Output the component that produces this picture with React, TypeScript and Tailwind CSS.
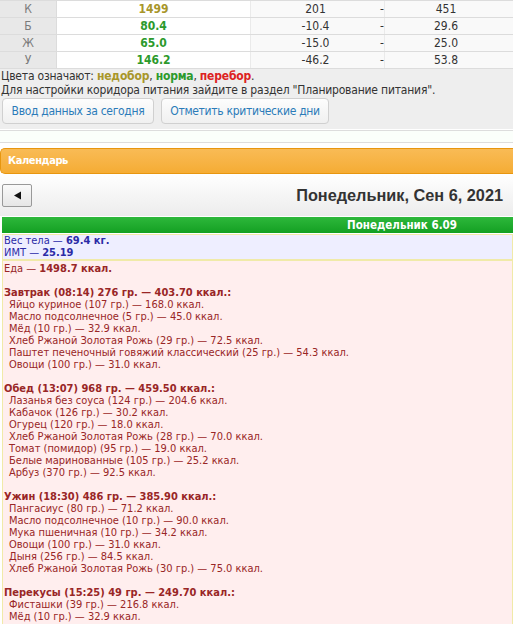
import React from "react";

const rows = [
  { k: "К", v: "1499", c: "text-[#a8962a]", a: "201", b: "451" },
  { k: "Б", v: "80.4", c: "text-[#2c9a2c]", a: "-10.4", b: "29.6" },
  { k: "Ж", v: "65.0", c: "text-[#2c9a2c]", a: "-15.0", b: "25.0" },
  { k: "У", v: "146.2", c: "text-[#2c9a2c]", a: "-46.2", b: "53.8" },
];

const meals = [
  {
    h: "Завтрак (08:14) 276 гр. — 403.70 ккал.:",
    items: [
      "Яйцо куриное (107 гр.) — 168.0 ккал.",
      "Масло подсолнечное (5 гр.) — 45.0 ккал.",
      "Мёд (10 гр.) — 32.9 ккал.",
      "Хлеб Ржаной Золотая Рожь (29 гр.) — 72.5 ккал.",
      "Паштет печеночный говяжий классический (25 гр.) — 54.3 ккал.",
      "Овощи (100 гр.) — 31.0 ккал.",
    ],
  },
  {
    h: "Обед (13:07) 968 гр. — 459.50 ккал.:",
    items: [
      "Лазанья без соуса (124 гр.) — 204.6 ккал.",
      "Кабачок (126 гр.) — 30.2 ккал.",
      "Огурец (120 гр.) — 18.0 ккал.",
      "Хлеб Ржаной Золотая Рожь (28 гр.) — 70.0 ккал.",
      "Томат (помидор) (95 гр.) — 19.0 ккал.",
      "Белые маринованные (105 гр.) — 25.2 ккал.",
      "Арбуз (370 гр.) — 92.5 ккал.",
    ],
  },
  {
    h: "Ужин (18:30) 486 гр. — 385.90 ккал.:",
    items: [
      "Пангасиус (80 гр.) — 71.2 ккал.",
      "Масло подсолнечное (10 гр.) — 90.0 ккал.",
      "Мука пшеничная (10 гр.) — 34.2 ккал.",
      "Овощи (100 гр.) — 31.0 ккал.",
      "Дыня (256 гр.) — 84.5 ккал.",
      "Хлеб Ржаной Золотая Рожь (30 гр.) — 75.0 ккал.",
    ],
  },
  {
    h: "Перекусы (15:25) 49 гр. — 249.70 ккал.:",
    items: ["Фисташки (39 гр.) — 216.8 ккал.", "Мёд (10 гр.) — 32.9 ккал."],
  },
];

export default function App() {
  return (
    <div className="w-[513px] h-[624px] overflow-hidden bg-white font-['DejaVu_Sans_Condensed','DejaVu_Sans',sans-serif]">
      <div className="bg-[#eeeeee] pb-[5px]">
        <div className="border-t border-[#dcdcdc]">
          {rows.map((r) => (
            <div key={r.k} className="flex h-[17px] border-b border-[#dcdcdc] text-[12px] leading-[16px]">
              <div className="w-[57px] bg-[#e8e8e8] text-[#7a7a7a] text-center border-r border-[#dcdcdc]">{r.k}</div>
              <div className={`w-[193px] bg-white text-center font-bold ${r.c}`}>{r.v}</div>
              <div className="w-[130px] bg-[#f9f9f9] text-center text-[#333] border-l border-[#eaeaea]">{r.a}</div>
              <div className="w-[4px] bg-[#f9f9f9] text-[#333] text-center">-</div>
              <div className="flex-1 bg-[#f9f9f9] text-center text-[#333] pr-[6px] border-l border-[#eaeaea]">{r.b}</div>
            </div>
          ))}
        </div>
        <div className="text-[12px] leading-[14px] tracking-[-0.2px] text-[#333] pl-[1px]">
          Цвета означают: <span className="font-bold text-[#a8962a]">недобор</span>,{" "}
          <span className="font-bold text-[#2c9a2c]">норма</span>,{" "}
          <span className="font-bold text-[#dd2222]">перебор</span>.
        </div>
        <div className="text-[12px] leading-[14px] tracking-[-0.2px] text-[#333] pl-[1px]">
          Для настройки коридора питания зайдите в раздел "Планирование питания".
        </div>
        <div className="flex gap-[7px] pl-[2px] pt-[1px]">
          <button className="h-[26px] w-[152px] rounded-[4px] border border-[#d0d0d0] bg-gradient-to-b from-[#fdfdfd] to-[#f0f0f0] text-[12px] tracking-[-0.3px] text-[#2b7bb9]">
            Ввод данных за сегодня
          </button>
          <button className="h-[26px] w-[168px] rounded-[4px] border border-[#d0d0d0] bg-gradient-to-b from-[#fdfdfd] to-[#f0f0f0] text-[12px] tracking-[-0.3px] text-[#2b7bb9]">
            Отметить критические дни
          </button>
        </div>
      </div>
      <div className="h-[13px] mt-[1px] border-t border-b border-[#dddddd] bg-[#fbfffb]"></div>
      <div className="pt-[5px]">
        <div className="h-[26px] rounded-l-[5px] border border-r-0 border-[#e8960f] bg-gradient-to-b from-[#f9bb55] to-[#f5ac33] flex items-center pl-[7px] text-[11px] tracking-[-0.4px] font-bold text-white">
          Календарь
        </div>
        <div className="h-[42px] bg-gradient-to-b from-[#ffffff] to-[#ececec] flex items-center justify-between pl-[2px] pr-[10px]">
          <button className="w-[30px] h-[23px] border border-[#999] rounded-[2px] bg-gradient-to-b from-[#fafafa] to-[#e6e6e6] flex items-center justify-center">
            <svg width="9" height="9" viewBox="0 0 9 9"><path d="M8 0.5 L1 4.5 L8 8.5 Z" fill="#111" /></svg>
          </button>
          <div className="font-['Liberation_Sans',Arial,sans-serif] font-bold text-[16.3px] text-[#333]">
            Понедельник, Сен 6, 2021
          </div>
        </div>
        <div className="ml-[2px] mt-[1px] h-[16px] bg-gradient-to-b from-[#2db83b] to-[#12a022] text-white font-bold text-[11.5px] leading-[16px] pl-[345px]">
          Понедельник 6.09
        </div>
        <div className="ml-[2px] mt-[1px] border border-[#f0eaa8] bg-[#eeeeff] text-[#2b2ba6] text-[11px] leading-[12px] px-[1px]">
          <div>Вес тела — <b>69.4 кг.</b></div>
          <div>ИМТ — <b>25.19</b></div>
        </div>
        <div className="ml-[2px] border border-[#f0eaa8] bg-[#ffeeee] text-[#992626] text-[11px] leading-[12px] px-[1px] pt-[2px] pb-[20px]">
          <div>Еда — <b>1498.7 ккал.</b></div>
          {meals.map((m) => (
            <div key={m.h} className="mt-[12px]">
              <div className="font-bold">{m.h}</div>
              {m.items.map((it, i) => (
                <div key={i} className="pl-[5px]">{it}</div>
              ))}
            </div>
          ))}
        </div>
      </div>
    </div>
  );
}
